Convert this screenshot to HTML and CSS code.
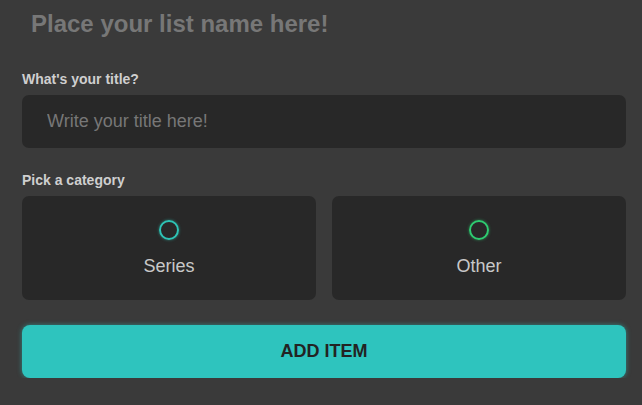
FILE: index.html
```html
<!DOCTYPE html>
<html>
<head>
<meta charset="utf-8">
<link rel="stylesheet" href="styles.css">
</head>
<body>
<div class="form">
  <h1 class="list-name">Place your list name here!</h1>
  <label class="field-label label-title">What's your title?</label>
  <input class="title-input" type="text" placeholder="Write your title here!">
  <label class="field-label label-cat">Pick a category</label>
  <div class="categories">
    <div class="cat-card">
      <span class="radio radio-teal"></span>
      <span class="cat-name">Series</span>
    </div>
    <div class="cat-card">
      <span class="radio radio-green"></span>
      <span class="cat-name">Other</span>
    </div>
  </div>
  <button class="add-btn">ADD ITEM</button>
</div>
</body>
</html>
```
FILE: styles.css
```css
html, body {
  margin: 0;
  padding: 0;
  background: #3a3a3a;
  font-family: "Liberation Sans", Arial, sans-serif;
}
.form {
  display: flex;
  flex-direction: column;
  padding: 10px 16px 0 22px;
}
.list-name {
  margin: 0 0 0 9px;
  font-size: 24px;
  line-height: 28px;
  font-weight: bold;
  color: #777777;
}
.field-label {
  display: block;
  font-size: 14px;
  line-height: 16px;
  font-weight: bold;
  color: #cfcfcf;
}
.label-title {
  margin-top: 33px;
}
.title-input {
  margin-top: 8px;
  height: 53px;
  box-sizing: border-box;
  border: none;
  outline: none;
  border-radius: 7px;
  background: #282828;
  padding: 0 0 0 25px;
  font-family: "Liberation Sans", Arial, sans-serif;
  font-size: 18px;
  color: #cccccc;
}
.title-input::placeholder {
  color: #777777;
}
.label-cat {
  margin-top: 24px;
}
.categories {
  margin-top: 8px;
  display: grid;
  grid-template-columns: 1fr 1fr;
  gap: 16px;
}
.cat-card {
  height: 104px;
  box-sizing: border-box;
  background: #282828;
  border-radius: 7px;
  display: flex;
  flex-direction: column;
  align-items: center;
  padding-top: 24px;
}
.radio {
  width: 20px;
  height: 20px;
  box-sizing: border-box;
  border-radius: 50%;
  border: 2px solid;
}
.radio-teal {
  border-color: #2ec4b6;
  box-shadow: 0 0 3px rgba(46, 196, 182, 0.6);
}
.radio-green {
  border-color: #2ecc71;
  box-shadow: 0 0 3px rgba(46, 204, 113, 0.6);
}
.cat-name {
  margin-top: 16px;
  font-size: 18px;
  line-height: 21px;
  color: #c8c8c8;
}
.add-btn {
  margin-top: 25px;
  height: 53px;
  border: none;
  border-radius: 8px;
  background: #2ec4be;
  box-shadow: 0 0 5px rgba(46, 196, 190, 0.55);
  font-family: "Liberation Sans", Arial, sans-serif;
  font-size: 18px;
  font-weight: bold;
  color: #232323;
  padding: 0;
}
```
